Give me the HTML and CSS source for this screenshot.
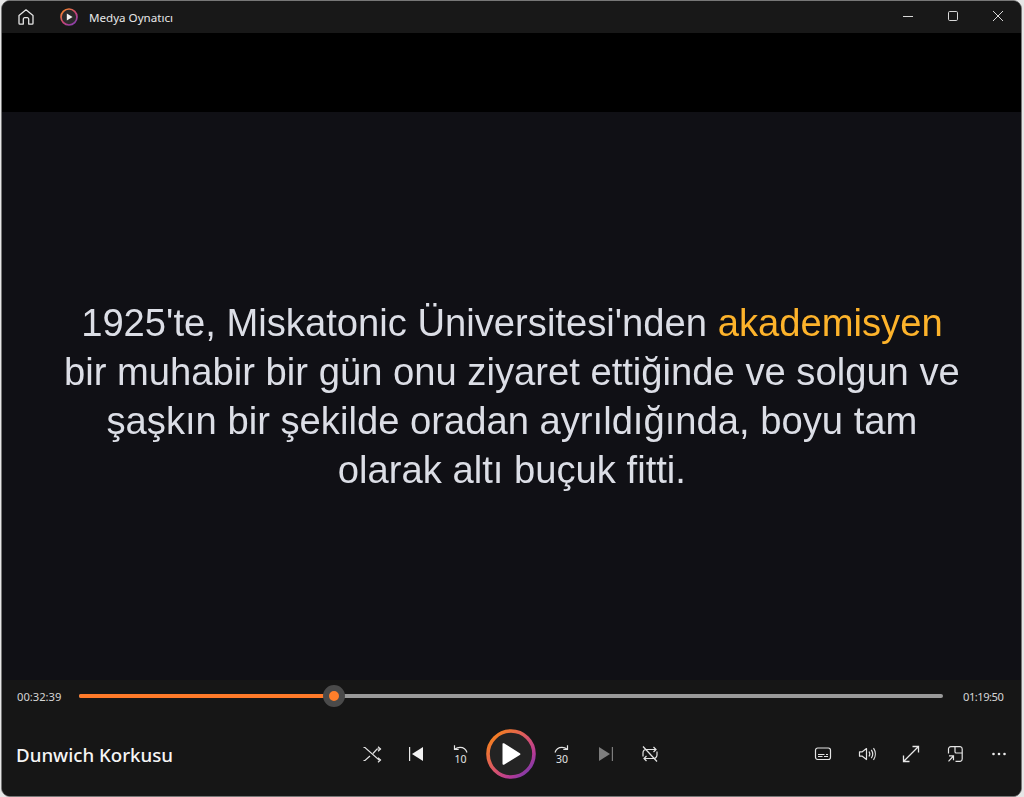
FILE: index.html
```html
<!DOCTYPE html>
<html lang="tr">
<head>
  <meta charset="UTF-8">
  <title>Medya Oynatıcı</title>
  <link rel="stylesheet" href="styles.css">
</head>
<body>
  <div class="player-window">
    <header class="title-bar">
      <div class="title-left">
        <svg class="home-icon" width="18" height="18" viewBox="0 0 18 18" fill="none" stroke="#e6e6e6" stroke-width="1.3" stroke-linejoin="round">
          <path d="M2 15.2V7.4L9 1.8l7 5.6v7.8a.9.9 0 0 1-.9.9h-3.4v-5a1.4 1.4 0 0 0-1.4-1.4H7.7a1.4 1.4 0 0 0-1.4 1.4v5H2.9a.9.9 0 0 1-.9-.9z"/>
        </svg>
        <svg class="app-logo" width="18" height="18" viewBox="0 0 18 18">
          <defs>
            <linearGradient id="logoRing" x1="0.1" y1="0" x2="0.9" y2="1">
              <stop offset="0" stop-color="#f58a24"/>
              <stop offset="0.55" stop-color="#c9437c"/>
              <stop offset="1" stop-color="#7d3fb5"/>
            </linearGradient>
          </defs>
          <circle cx="9" cy="9" r="8" fill="#2b2b2b" stroke="url(#logoRing)" stroke-width="1.7"/>
          <path d="M6.8 5.4v7.2L12.6 9z" fill="#f2f2f2"/>
        </svg>
        <span class="app-name">Medya Oynatıcı</span>
      </div>
      <div class="window-buttons">
        <svg width="12" height="12" viewBox="0 0 12 12" stroke="#d8d8d8" fill="none"><path d="M1 6.500h10"/></svg>
        <svg width="12" height="12" viewBox="0 0 12 12" stroke="#d8d8d8" fill="none"><rect x="1.500" y="1.500" width="9" height="9" rx="1.200"/></svg>
        <svg width="12" height="12" viewBox="0 0 12 12" stroke="#d8d8d8" fill="none"><path d="M1 1l10 10M11 1L1 11"/></svg>
      </div>
    </header>

    <div class="top-band"></div>

    <main class="video-area">
      <p class="caption">1925'te, Miskatonic Üniversitesi'nden <span class="caption-hot">akademisyen</span><br>
      bir muhabir bir gün onu ziyaret ettiğinde ve solgun ve<br>
      şaşkın bir şekilde oradan ayrıldığında, boyu tam<br>
      olarak altı buçuk fitti.</p>
    </main>

    <footer class="controls">
      <div class="seek-row">
        <span class="time">00:32:39</span>
        <div class="track">
          <div class="track-done"></div>
          <div class="thumb"></div>
        </div>
        <span class="time time-end">01:19:50</span>
      </div>

      <div class="button-row">
        <div class="media-title">Dunwich Korkusu</div>

        <div class="transport">
          <button class="ctl">
            <svg width="20" height="20" viewBox="0 0 20 20" fill="none" stroke="#e4e4e4" stroke-width="1.200">
              <path d="M1.500 3.500h1.500l14 12.500h1.500M1.500 16.500h1.500l5-4.500M11 9.500l4-4.500h3.500"/>
              <path d="M16 2.800l2.500 2.200-2.500 2.200M16 13.800l2.500 2.200-2.500 2.200"/>
            </svg>
          </button>
          <button class="ctl">
            <svg width="20" height="20" viewBox="0 0 20 20">
              <path d="M3 3h1.200v14H3z" fill="#e8e8e8"/>
              <path d="M17 3v14L6 10z" fill="#f2f2f2"/>
            </svg>
          </button>
          <button class="ctl">
            <svg width="20" height="20" viewBox="0 0 20 20" fill="none" stroke="#e4e4e4" stroke-width="1.200">
              <path d="M17 8.500C16 5 13.500 3.300 10 3.300c-1.800 0-3.500.5-5 1.700"/>
              <path d="M4.500 1.300v4.200h4.200"/>
              <text class="skip-num" x="10.500" y="18.500">10</text>
            </svg>
          </button>
          <button class="play-btn">
            <svg width="50" height="50" viewBox="0 0 50 50">
              <defs>
                <linearGradient id="playRing" x1="0.1" y1="0.1" x2="0.9" y2="0.9">
                  <stop offset="0" stop-color="#f5801f"/>
                  <stop offset="0.5" stop-color="#d8556a"/>
                  <stop offset="0.8" stop-color="#b63a96"/>
                  <stop offset="1" stop-color="#7c3aa8"/>
                </linearGradient>
              </defs>
              <circle cx="25" cy="25" r="23" fill="#232323" stroke="url(#playRing)" stroke-width="3.600"/>
              <path d="M16.500 15.200v19.600a1 1 0 0 0 1.500.9l15.800-9.800a1 1 0 0 0 0-1.700L18 14.300a1 1 0 0 0-1.500.9z" fill="#fff"/>
            </svg>
          </button>
          <button class="ctl">
            <svg width="20" height="20" viewBox="0 0 20 20" fill="none" stroke="#e4e4e4" stroke-width="1.200">
              <path d="M3 8.500C4 5 6.500 3.300 10 3.300c1.800 0 3.500.5 5 1.700"/>
              <path d="M15.500 1.300v4.200h-4.200"/>
              <text class="skip-num" x="10" y="18.500">30</text>
            </svg>
          </button>
          <button class="ctl">
            <svg width="20" height="20" viewBox="0 0 20 20">
              <path d="M3 3v14l11-7z" fill="#7d7d7d"/>
              <path d="M15.800 3H17v14h-1.200z" fill="#7d7d7d"/>
            </svg>
          </button>
          <button class="ctl">
            <svg width="20" height="20" viewBox="0 0 20 20" fill="none" stroke="#e4e4e4" stroke-width="1.200">
              <path d="M3 12.500V9a3.500 3.500 0 0 1 3.500-3.500H16M13.500 3L16 5.500 13.500 8"/>
              <path d="M17 7.500V11a3.500 3.500 0 0 1-3.500 3.500H4M6.500 12L4 14.500 6.500 17"/>
              <path d="M3 2.500l14 15"/>
            </svg>
          </button>
        </div>

        <div class="extras">
          <button class="ctl">
            <svg width="20" height="20" viewBox="0 0 20 20" fill="none" stroke="#e4e4e4" stroke-width="1.200">
              <rect x="2.500" y="4" width="15" height="11.500" rx="2.200"/>
              <path d="M5 12.500h4.500M11 12.500h4M5 10.500h6.500M13 10.500h2"/>
            </svg>
          </button>
          <button class="ctl">
            <svg width="20" height="20" viewBox="0 0 20 20" fill="none" stroke="#e4e4e4" stroke-width="1.200" stroke-linejoin="round">
              <path d="M2.500 7.800v4.400h2.800l4.200 3.300V4.500L5.300 7.800z"/>
              <path d="M12 7.500c1 1.500 1 3.500 0 5M14.300 5.800c1.700 2.500 1.700 6 0 8.400M16.500 4.200c2.400 3.400 2.400 8.200 0 11.600"/>
            </svg>
          </button>
          <button class="ctl">
            <svg width="20" height="20" viewBox="0 0 20 20" fill="none" stroke="#e8e8e8" stroke-width="1.300">
              <path d="M11.500 2.500h6v6M17.500 2.500l-15 15M2.500 11.500v6h6"/>
            </svg>
          </button>
          <button class="ctl">
            <svg width="20" height="20" viewBox="0 0 20 20" fill="none" stroke="#e4e4e4" stroke-width="1.200">
              <path d="M3.500 9.500V5A2.300 2.300 0 0 1 5.800 2.700h9.400A2.300 2.300 0 0 1 17.200 5v10a2.300 2.300 0 0 1-2 2.300H10.500"/>
              <path d="M10 2.700v5a1.300 1.300 0 0 0 1.300 1.300h5.900"/>
              <path d="M3.500 17.300l4.500-4.800M4 11.800h4.500v4.500"/>
            </svg>
          </button>
          <button class="ctl">
            <svg width="20" height="20" viewBox="0 0 20 20" fill="#ececec">
              <circle cx="4.500" cy="10" r="1.300"/><circle cx="10" cy="10" r="1.300"/><circle cx="15.500" cy="10" r="1.300"/>
            </svg>
          </button>
        </div>
      </div>
    </footer>
  </div>
</body>
</html>
```

FILE: styles.css
```css
html, body {
  margin: 0;
  height: 100%;
}

body {
  background: #e6e6e6;
  overflow: hidden;
  font-family: "Noto Sans", "Open Sans", sans-serif;
}

.player-window {
  box-sizing: border-box;
  width: 1021px;
  height: 797px;
  margin-left: 1px;
  border: 1px solid #777;
  border-radius: 9px;
  overflow: hidden;
  display: flex;
  flex-direction: column;
  background: #161616;
}

.title-bar {
  flex: 0 0 32px;
  display: flex;
  align-items: center;
  justify-content: space-between;
  background: #181818;
}

.title-left {
  display: flex;
  align-items: center;
}

.home-icon {
  margin-left: 15px;
}

.app-logo {
  margin-left: 25px;
}

.app-name {
  margin-left: 11px;
  font-size: 11.600px;
  color: #e8e8e8;
}

.window-buttons {
  display: flex;
  gap: 33px;
  padding: 0 17px 2px 0;
}

.top-band {
  flex: 0 0 79px;
  background: #000;
}

.video-area {
  flex: 1;
  display: flex;
  align-items: center;
  justify-content: center;
  background: #101015;
}

.caption {
  margin: 0;
  font-family: "Liberation Sans", Arial, sans-serif;
  font-size: 38.200px;
  line-height: 49px;
  text-align: center;
  color: #dcdee6;
  will-change: transform;
}

.caption-hot {
  color: #fdb32b;
}

.controls {
  flex: 0 0 115px;
  background: #161616;
}

.seek-row {
  display: flex;
  align-items: center;
  height: 32px;
  padding: 0 17px 0 15px;
}

.time {
  width: 46px;
  font-size: 11.200px;
  color: #d6d6d6;
}

.time-end {
  width: 41px;
  margin-left: 20px;
  letter-spacing: -0.5px;
}

.track {
  position: relative;
  flex: 1;
  height: 4px;
  margin-left: 16px;
  border-radius: 2px;
  background: #9a9a9a;
}

.track-done {
  width: 255px;
  height: 100%;
  border-radius: 2px 0 0 2px;
  background: #ff7a29;
}

.thumb {
  position: absolute;
  left: 244px;
  top: -9px;
  box-sizing: border-box;
  width: 22px;
  height: 22px;
  border: 6px solid #4a4a4a;
  border-radius: 50%;
  background: #ff7f2a;
}

.button-row {
  display: grid;
  grid-template-columns: 1fr auto 1fr;
  align-items: center;
  height: 84px;
  padding-right: 2px;
}

.media-title {
  padding-left: 14px;
  font-size: 18.700px;
  font-weight: 500;
  color: #f5f5f5;
}

.transport,
.extras {
  display: flex;
  align-items: center;
}

.extras {
  justify-content: flex-end;
  margin-right: -2px;
}

.ctl,
.play-btn {
  padding: 0;
  border: 0;
  background: none;
  display: flex;
  align-items: center;
  justify-content: center;
}

.ctl {
  width: 44px;
  height: 44px;
}

.play-btn {
  width: 58px;
  height: 50px;
}

.skip-num {
  font-family: "Noto Sans", sans-serif;
  font-size: 10.500px;
  text-anchor: middle;
  fill: #e4e4e4;
  stroke: none;
}
```
